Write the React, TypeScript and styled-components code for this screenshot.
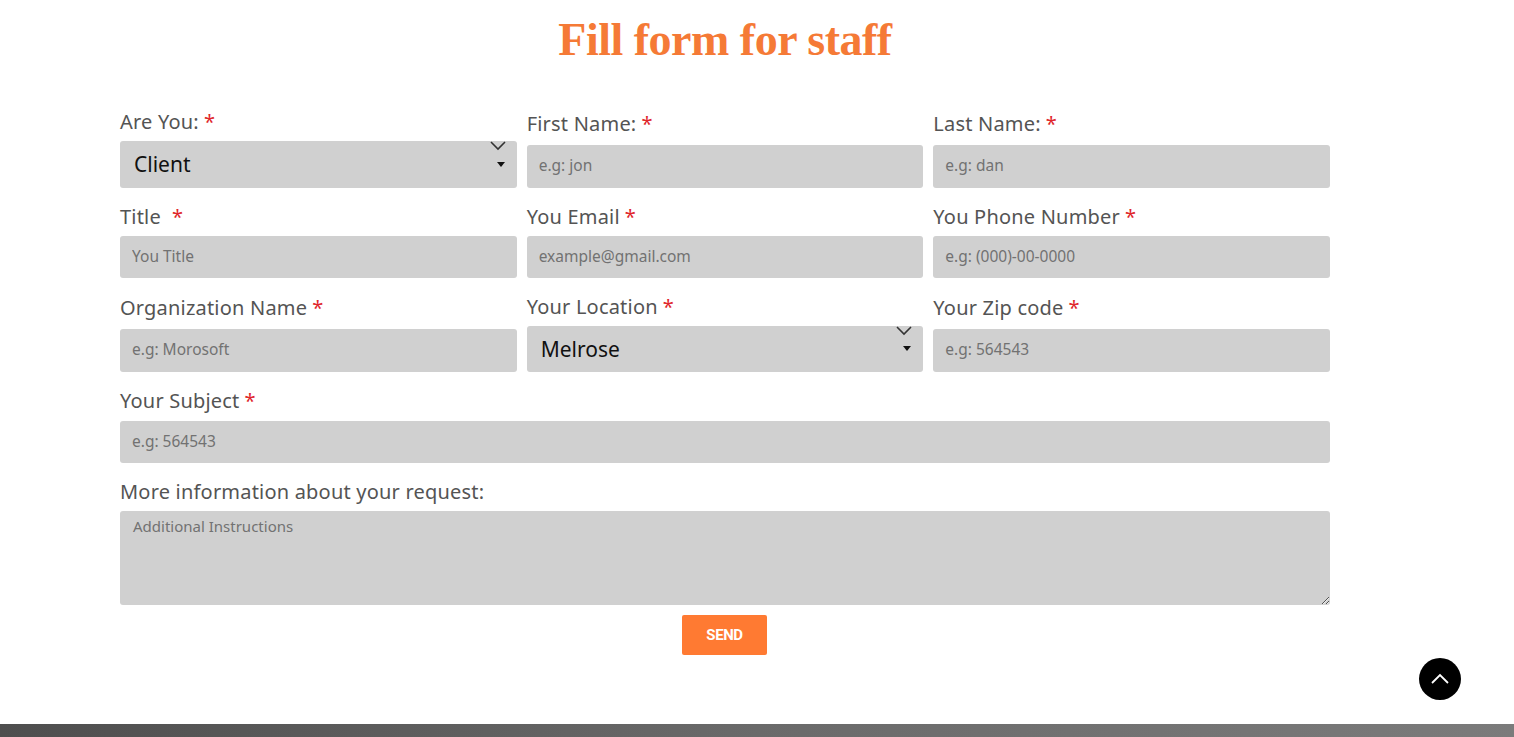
import React from "react";
import styled, { createGlobalStyle } from "styled-components";

const Global = createGlobalStyle`
  html, body { margin: 0; padding: 0; background: #fff; }
  body { font-family: "Noto Sans", "Open Sans", sans-serif; }
  * { box-sizing: border-box; }
`;

const Page = styled.div`
  width: 1514px;
  height: 737px;
  display: flex;
  flex-direction: column;
  position: relative;
  overflow: hidden;
`;

const Main = styled.main`
  flex: 1;
  padding: 12px 0 0 120px;
`;

const Title = styled.h1`
  margin: 0;
  width: 1210px;
  text-align: center;
  font-family: "Liberation Serif", "DejaVu Serif", serif;
  font-weight: 700;
  font-size: 46px;
  line-height: 56px;
  letter-spacing: -0.5px;
  color: #f57a36;
`;

const Form = styled.form`
  width: 1210px;
  margin-top: 42px;
  display: flex;
  flex-direction: column;
  gap: 17px;
`;

const Row = styled.div<{ $cols: number }>`
  display: grid;
  grid-template-columns: repeat(${(p) => p.$cols}, 1fr);
  column-gap: 10px;
  align-items: end;
`;

const Field = styled.div<{ $gap?: number }>`
  display: flex;
  flex-direction: column;
  gap: ${(p) => p.$gap ?? 7}px;
`;

const Label = styled.label`
  font-family: "Noto Sans", sans-serif;
  font-size: 20px;
  line-height: 24px;
  color: #545454;
  letter-spacing: 0.2px;
`;

const Star = styled.span<{ $spaced?: boolean }>`
  color: #e0262b;
  margin-left: ${(p) => (p.$spaced ? 11 : 5)}px;
`;

const inputBase = `
  width: 100%;
  border: none;
  outline: none;
  background: #d0d0d0;
  border-radius: 3px;
  font-family: "Noto Sans", sans-serif;
  color: #333;
`;

const Input = styled.input<{ $h?: number }>`
  ${inputBase}
  height: ${(p) => p.$h ?? 43}px;
  padding: 0 12px 3px;
  font-size: 15.5px;
  &::placeholder { color: #727272; }
`;

const SelectWrap = styled.div`
  position: relative;
`;

const Select = styled.select<{ $h: number }>`
  ${inputBase}
  appearance: none;
  height: ${(p) => p.$h}px;
  padding: 0 14px 1px;
  font-size: 21px;
  color: #111;
`;

const Chevron = styled.svg`
  position: absolute;
  right: 10px;
  top: -1px;
  pointer-events: none;
`;

const Caret = styled.div<{ $top: number }>`
  position: absolute;
  right: 12px;
  top: ${(p) => p.$top}px;
  width: 0;
  height: 0;
  border-left: 4px solid transparent;
  border-right: 4px solid transparent;
  border-top: 5px solid #111;
  pointer-events: none;
`;

const TextArea = styled.textarea`
  ${inputBase}
  height: 94px;
  padding: 5px 13px;
  font-size: 15px;
  resize: vertical;
  display: block;
  &::placeholder { color: #727272; }
`;

const ButtonRow = styled.div`
  display: flex;
  justify-content: center;
  margin-top: -7px;
  padding-right: 1px;
`;

const SendButton = styled.button`
  width: 85px;
  height: 40px;
  border: none;
  border-radius: 2px;
  background: #ff7a32;
  color: #fff;
  font-family: "Roboto", sans-serif;
  font-weight: 700;
  font-size: 15px;
  letter-spacing: -0.4px;
  cursor: pointer;
`;

const ToTop = styled.button`
  position: absolute;
  left: 1419px;
  top: 658px;
  width: 42px;
  height: 42px;
  border-radius: 50%;
  border: none;
  background: #000;
  display: flex;
  align-items: center;
  justify-content: center;
  padding: 0;
`;

const Footer = styled.footer`
  height: 13px;
  background: linear-gradient(90deg, #4e4e4e 0%, #6a6a6a 50%, #7b7b7b 100%);
`;

const SelectField: React.FC<{ value: string; h: number; caretTop: number }> = ({
  value,
  h,
  caretTop,
}) => (
  <SelectWrap>
    <Select $h={h} defaultValue={value}>
      <option>{value}</option>
    </Select>
    <Chevron width="18" height="12" viewBox="0 0 18 12">
      <path d="M2 2 L9 9 L16 2" fill="none" stroke="#333" strokeWidth="1.6" />
    </Chevron>
    <Caret $top={caretTop} />
  </SelectWrap>
);

export default function App() {
  return (
    <Page>
      <Global />
      <Main>
        <Title>Fill form for staff</Title>
        <Form onSubmit={(e) => e.preventDefault()}>
          <Row $cols={3}>
            <Field>
              <Label>
                Are You:<Star>*</Star>
              </Label>
              <SelectField value="Client" h={47} caretTop={21} />
            </Field>
            <Field $gap={9}>
              <Label>
                First Name:<Star>*</Star>
              </Label>
              <Input placeholder="e.g: jon" />
            </Field>
            <Field $gap={9}>
              <Label>
                Last Name:<Star>*</Star>
              </Label>
              <Input placeholder="e.g: dan" />
            </Field>
          </Row>
          <Row $cols={3}>
            <Field>
              <Label>
                Title<Star $spaced>*</Star>
              </Label>
              <Input placeholder="You Title" $h={42} />
            </Field>
            <Field>
              <Label>
                You Email<Star>*</Star>
              </Label>
              <Input placeholder="example@gmail.com" $h={42} />
            </Field>
            <Field>
              <Label>
                You Phone Number<Star>*</Star>
              </Label>
              <Input placeholder="e.g: (000)-00-0000" $h={42} />
            </Field>
          </Row>
          <Row $cols={3}>
            <Field $gap={9}>
              <Label>
                Organization Name<Star>*</Star>
              </Label>
              <Input placeholder="e.g: Morosoft" />
            </Field>
            <Field>
              <Label>
                Your Location<Star>*</Star>
              </Label>
              <SelectField value="Melrose" h={46} caretTop={20} />
            </Field>
            <Field $gap={9}>
              <Label>
                Your Zip code<Star>*</Star>
              </Label>
              <Input placeholder="e.g: 564543" />
            </Field>
          </Row>
          <Row $cols={1}>
            <Field $gap={8}>
              <Label>
                Your Subject<Star>*</Star>
              </Label>
              <Input placeholder="e.g: 564543" $h={42} />
            </Field>
          </Row>
          <Row $cols={1}>
            <Field>
              <Label>More information about your request:</Label>
              <TextArea placeholder="Additional Instructions" />
            </Field>
          </Row>
          <ButtonRow>
            <SendButton type="submit">SEND</SendButton>
          </ButtonRow>
        </Form>
      </Main>
      <Footer />
      <ToTop aria-label="Back to top">
        <svg width="20" height="12" viewBox="0 0 20 12">
          <path d="M2 10 L10 2 L18 10" fill="none" stroke="#fff" strokeWidth="1.8" />
        </svg>
      </ToTop>
    </Page>
  );
}
